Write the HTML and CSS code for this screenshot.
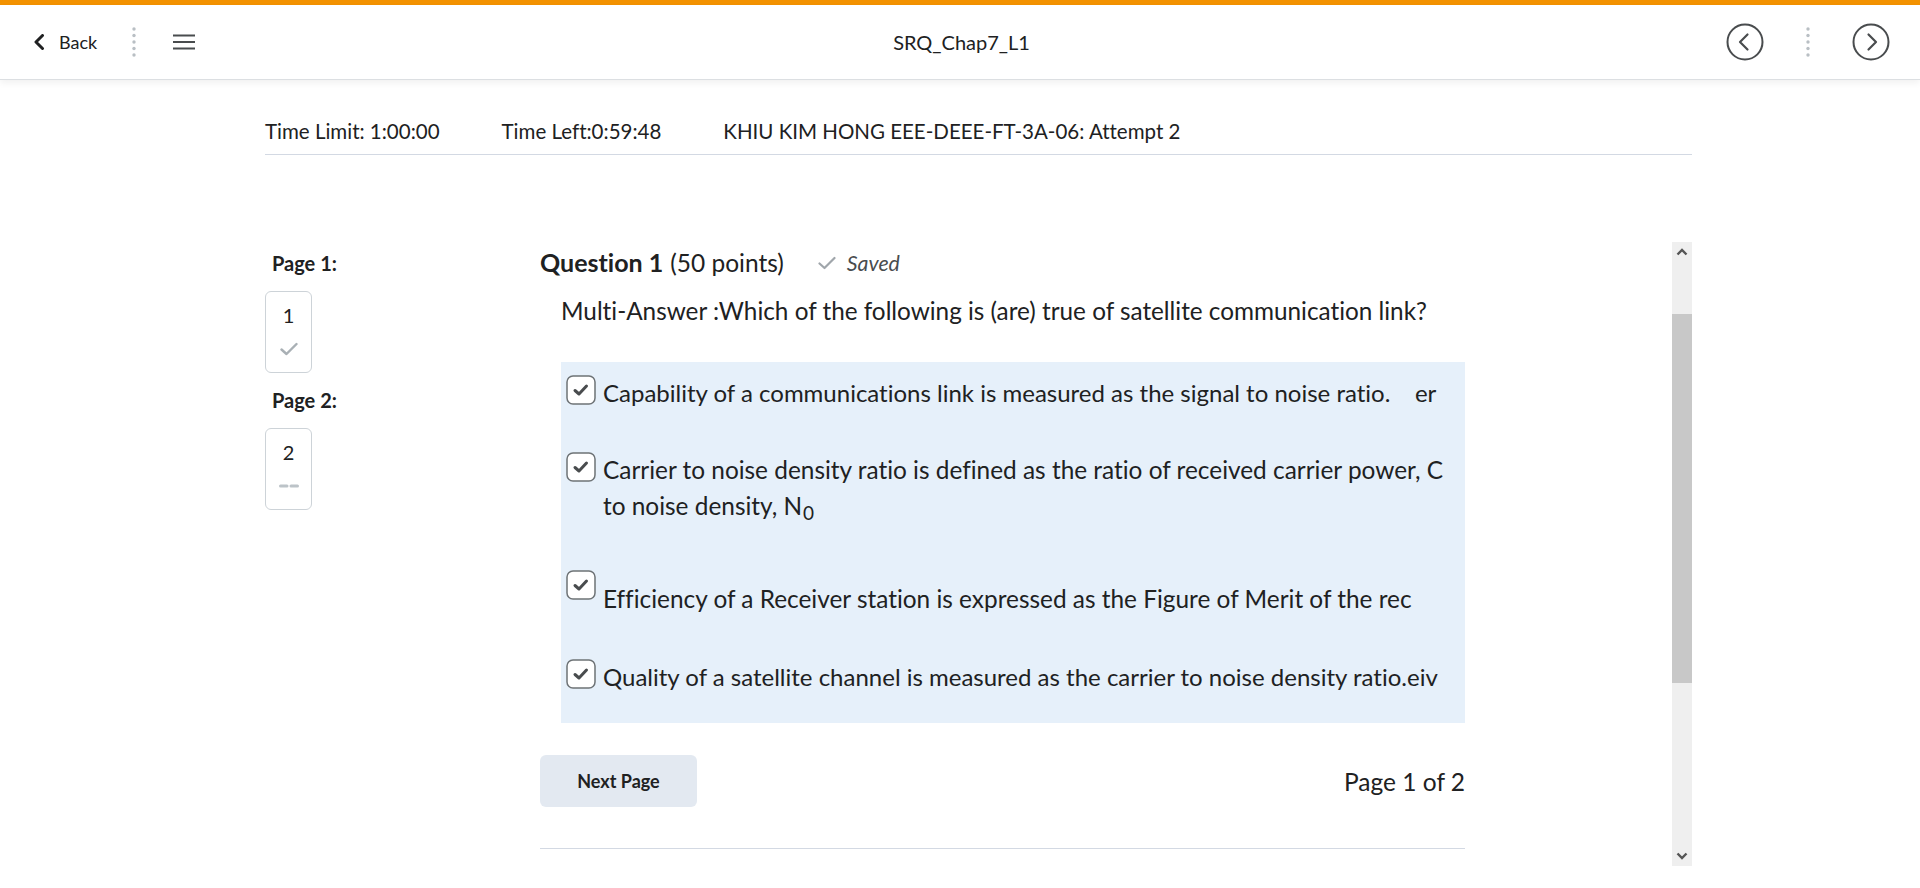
FILE: index.html
```html
<!DOCTYPE html>
<html lang="en">
<head>
<meta charset="utf-8">
<title>SRQ_Chap7_L1</title>
<link rel="stylesheet" href="styles.css">
</head>
<body>
<div class="accent"></div>
<header class="nav">
  <div class="nav-left">
    <a class="back">
      <svg width="12" height="16" viewBox="0 0 12 16"><path d="M9.5 1.5 L3 8 L9.5 14.5" fill="none" stroke="#202122" stroke-width="3" stroke-linecap="round" stroke-linejoin="round"/></svg>
      <span>Back</span>
    </a>
    <svg class="dots" width="4" height="30" viewBox="0 0 4 30"><circle cx="2" cy="2" r="1.7"/><circle cx="2" cy="8.5" r="1.7"/><circle cx="2" cy="15" r="1.7"/><circle cx="2" cy="21.5" r="1.7"/><circle cx="2" cy="28" r="1.7"/></svg>
    <svg class="menu" width="22" height="16" viewBox="0 0 22 16"><path d="M0 1.5 H22 M0 8 H22 M0 14.5 H22" stroke="#494c4e" stroke-width="2"/></svg>
  </div>
  <div class="nav-title">SRQ_Chap7_L1</div>
  <div class="nav-right">
    <svg width="38" height="38" viewBox="0 0 38 38"><circle cx="19" cy="19" r="17.5" fill="none" stroke="#494c4e" stroke-width="2"/><path d="M21.5 11.5 L14 19 L21.5 26.5" fill="none" stroke="#494c4e" stroke-width="2.2" stroke-linecap="round" stroke-linejoin="round"/></svg>
    <svg class="dots" width="4" height="30" viewBox="0 0 4 30"><circle cx="2" cy="2" r="1.7"/><circle cx="2" cy="8.5" r="1.7"/><circle cx="2" cy="15" r="1.7"/><circle cx="2" cy="21.5" r="1.7"/><circle cx="2" cy="28" r="1.7"/></svg>
    <svg width="38" height="38" viewBox="0 0 38 38"><circle cx="19" cy="19" r="17.5" fill="none" stroke="#494c4e" stroke-width="2"/><path d="M16.5 11.5 L24 19 L16.5 26.5" fill="none" stroke="#494c4e" stroke-width="2.2" stroke-linecap="round" stroke-linejoin="round"/></svg>
  </div>
</header>

<main class="page">
  <div class="info">
    <span>Time Limit: 1:00:00</span>
    <span>Time Left:0:59:48</span>
    <span>KHIU KIM HONG EEE-DEEE-FT-3A-06: Attempt 2</span>
  </div>

  <div class="body">
    <aside class="pages">
      <div class="page-label">Page 1:</div>
      <div class="page-box">
        <span class="num">1</span>
        <span class="status">
          <svg width="18" height="14" viewBox="0 0 18 14"><path d="M1.5 7.5 L6.5 12 L16.5 2" fill="none" stroke="#a9b0b5" stroke-width="2.4" stroke-linecap="round" stroke-linejoin="round"/></svg>
        </span>
      </div>
      <div class="page-label second">Page 2:</div>
      <div class="page-box">
        <span class="num">2</span>
        <span class="status">
          <svg width="20" height="4" viewBox="0 0 20 4"><path d="M1.5 2 H8 M12 2 H18.5" stroke="#bcc3c8" stroke-width="3" stroke-linecap="round"/></svg>
        </span>
      </div>
    </aside>

    <section class="question">
      <div class="q-head">
        <span class="q-title">Question 1</span>
        <span class="q-points">(50 points)</span>
        <span class="saved">
          <svg width="18" height="14" viewBox="0 0 18 14"><path d="M1.5 7.5 L6.5 12 L16.5 2" fill="none" stroke="#a0a6ab" stroke-width="2.2" stroke-linecap="round" stroke-linejoin="round"/></svg>
          <em>Saved</em>
        </span>
      </div>
      <p class="q-text">Multi-Answer :Which of the following is (are) true of satellite communication link?</p>

      <div class="answers">
        <label class="answer">
          <svg class="cb" width="30" height="30" viewBox="0 0 30 30"><rect x="1" y="1" width="28" height="28" rx="6" fill="#fff" stroke="#6e7376" stroke-width="1.5"/><path d="M9 15.5 L13 19 L20.5 11" fill="none" stroke="#494c4e" stroke-width="3" stroke-linecap="round" stroke-linejoin="round"/></svg>
          <span class="a-text">Capability of a communications link is measured as the signal to noise ratio.&nbsp;&nbsp;&nbsp; er</span>
        </label>
        <label class="answer wide">
          <svg class="cb" width="30" height="30" viewBox="0 0 30 30"><rect x="1" y="1" width="28" height="28" rx="6" fill="#fff" stroke="#6e7376" stroke-width="1.5"/><path d="M9 15.5 L13 19 L20.5 11" fill="none" stroke="#494c4e" stroke-width="3" stroke-linecap="round" stroke-linejoin="round"/></svg>
          <span class="a-text">Carrier to noise density ratio is defined as the ratio of received carrier power, C to noise density, N<sub>0</sub></span>
        </label>
        <label class="answer wide third">
          <svg class="cb" width="30" height="30" viewBox="0 0 30 30"><rect x="1" y="1" width="28" height="28" rx="6" fill="#fff" stroke="#6e7376" stroke-width="1.5"/><path d="M9 15.5 L13 19 L20.5 11" fill="none" stroke="#494c4e" stroke-width="3" stroke-linecap="round" stroke-linejoin="round"/></svg>
          <span class="a-text">Efficiency of a Receiver station is expressed as the Figure of Merit of the rec</span>
        </label>
        <label class="answer">
          <svg class="cb" width="30" height="30" viewBox="0 0 30 30"><rect x="1" y="1" width="28" height="28" rx="6" fill="#fff" stroke="#6e7376" stroke-width="1.5"/><path d="M9 15.5 L13 19 L20.5 11" fill="none" stroke="#494c4e" stroke-width="3" stroke-linecap="round" stroke-linejoin="round"/></svg>
          <span class="a-text">Quality of a satellite channel is measured as the carrier to noise density ratio.eiv</span>
        </label>
      </div>

      <div class="q-foot">
        <button class="next-btn">Next Page</button>
        <span class="page-count">Page 1 of 2</span>
      </div>
      <div class="q-rule"></div>
    </section>

    <div class="scrollbar">
      <div class="sb-arrow">
        <svg width="12" height="8" viewBox="0 0 12 8"><path d="M1.5 6.5 L6 2 L10.5 6.5" fill="none" stroke="#555" stroke-width="2.4"/></svg>
      </div>
      <div class="sb-before"></div>
      <div class="sb-thumb"></div>
      <div class="sb-after"></div>
      <div class="sb-arrow">
        <svg width="12" height="8" viewBox="0 0 12 8"><path d="M1.5 1.5 L6 6 L10.5 1.5" fill="none" stroke="#555" stroke-width="2.4"/></svg>
      </div>
    </div>
  </div>
</main>
</body>
</html>
```

FILE: styles.css
```css
* { box-sizing: border-box; }

body {
  margin: 0;
  font-family: Lato, "Noto Sans", sans-serif;
  font-variant-ligatures: none;
  color: #202122;
  background: #fff;
}

.accent {
  height: 5px;
  background: #f39200;
}

.nav {
  height: 75px;
  display: grid;
  grid-template-columns: 1fr auto 1fr;
  align-items: center;
  padding: 0 30px 0 33px;
  border-bottom: 1px solid #dcdfe2;
  box-shadow: 0 3px 7px rgba(0, 0, 0, 0.06);
}

.nav-left {
  display: flex;
  align-items: center;
}

.back {
  display: flex;
  align-items: center;
  gap: 14px;
  font-size: 18px;
  color: #202122;
}

.dots { fill: #b9bfc4; }

.nav-left .dots { margin-left: 35px; }
.nav-left .menu { margin-left: 37px; }

.nav-title {
  font-size: 20px;
  color: #202122;
}

.nav-right {
  display: flex;
  align-items: center;
  justify-content: flex-end;
  gap: 42px;
}

.page {
  margin-left: 265px;
  width: 1427px;
}

.info {
  display: flex;
  gap: 62px;
  font-size: 20.5px;
  line-height: 24px;
  padding: 39px 0 11px;
  border-bottom: 1px solid #d3d9e3;
}

.body {
  display: flex;
  margin-top: 87px;
  height: 624px;
}

.pages {
  width: 275px;
  flex: none;
  padding-top: 9px;
}

.page-label {
  font-weight: 700;
  font-size: 20px;
  line-height: 24px;
  padding-left: 7px;
}

.page-label.second { margin-top: 15px; }

.page-box {
  margin-top: 16px;
  width: 47px;
  height: 82px;
  border: 1px solid #cdd3d8;
  border-radius: 6px;
  display: flex;
  flex-direction: column;
  align-items: center;
  padding-top: 11px;
}

.page-box .num {
  font-size: 20px;
  line-height: 24px;
}

.page-box .status {
  margin-top: 12px;
  height: 20px;
  display: flex;
  align-items: center;
  justify-content: center;
}

.question {
  width: 925px;
  flex: none;
  padding-top: 5px;
}

.q-head {
  display: flex;
  align-items: baseline;
  line-height: 30px;
}

.q-title {
  font-size: 25px;
  font-weight: 700;
}

.q-points {
  font-size: 24.5px;
  margin-left: 7px;
}

.saved {
  margin-left: 34px;
  display: flex;
  align-items: center;
  gap: 11px;
  font-size: 21.3px;
  color: #494c4e;
  align-self: center;
}

.q-text {
  margin: 18px 0 0 21px;
  font-size: 24.3px;
  line-height: 30px;
}

.answers {
  margin: 36px 0 0 21px;
  width: 904px;
  background: #e6f0fa;
  padding: 13px 12px 28px 5px;
}

.answer {
  display: flex;
  align-items: flex-start;
  margin-top: 41px;
  font-size: 24px;
  line-height: 36px;
}

.answer.wide { font-size: 24.4px; }

.answer:first-child { margin-top: 0; }

.answer.third { margin-top: 46px; }
.answer.third .a-text { padding-top: 11px; }

.answer.third + .answer { margin-top: 42px; }

.cb {
  flex: none;
}

.a-text { margin-left: 7px; }

.a-text sub {
  font-size: 19px;
  vertical-align: -5px;
  line-height: 0;
  margin-left: 1px;
}

.q-foot {
  margin: 32px 0 0 0;
  display: flex;
  align-items: center;
  justify-content: space-between;
}

.next-btn {
  width: 157px;
  height: 52px;
  border: none;
  border-radius: 6px;
  background: #e3e9f1;
  font-family: Lato, "Noto Sans", sans-serif;
  font-weight: 700;
  font-size: 18px;
  color: #202122;
}

.page-count {
  font-size: 24.5px;
}

.q-rule {
  margin-top: 41px;
  border-top: 1px solid #d3d9e3;
}

.scrollbar {
  margin-left: auto;
  width: 20px;
  flex: none;
  display: flex;
  flex-direction: column;
  background: #efefef;
}

.sb-arrow {
  height: 20px;
  flex: none;
  display: flex;
  align-items: center;
  justify-content: center;
}

.sb-before { height: 52px; flex: none; }

.sb-thumb {
  height: 369px;
  flex: none;
  background: #c8c8c8;
}

.sb-after { flex: 1; }
```
